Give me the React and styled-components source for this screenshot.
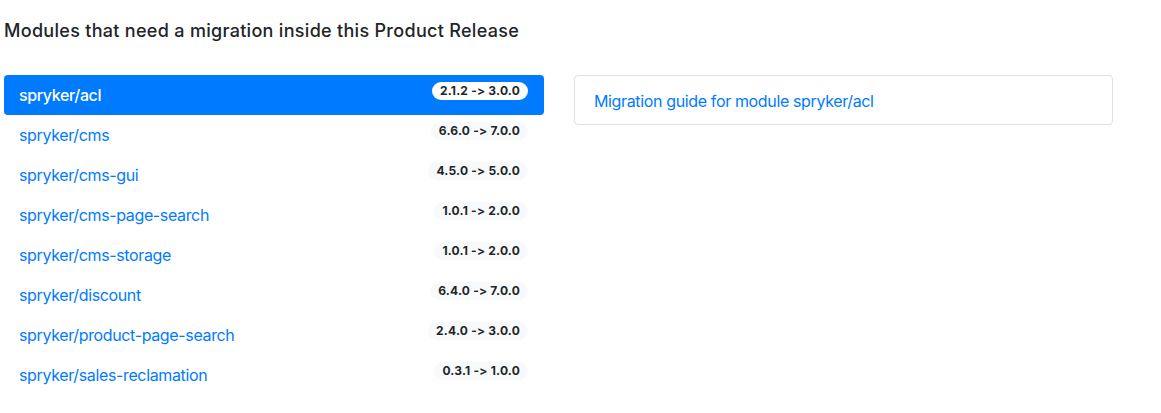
import React from "react";
import styled, { createGlobalStyle } from "styled-components";

const Global = createGlobalStyle`
  html, body { margin: 0; padding: 0; background: #fff; }
  body {
    font-family: Inter, "Liberation Sans", Arial, sans-serif;
    font-feature-settings: "calt" 0, "liga" 0;
    font-variant-ligatures: none;
    color: #212529;
    -webkit-font-smoothing: antialiased;
  }
`;

const Page = styled.div`
  padding: 19px 4px 0 4px;
`;

const Title = styled.h5`
  margin: 0 0 32px 0;
  font-size: 18px;
  font-weight: 500;
  line-height: 24px;
  letter-spacing: 0.3px;
  color: #212529;
`;

const Row = styled.div`
  display: flex;
  align-items: flex-start;
  gap: 30px;
`;

const List = styled.div`
  width: 540px;
  display: flex;
  flex-direction: column;
`;

const Item = styled.a`
  display: flex;
  justify-content: space-between;
  align-items: flex-start;
  height: 40px;
  box-sizing: border-box;
  padding: 8px 16px 8px 15px;
  border-radius: 4px;
  font-size: 16px;
  line-height: 24px;
  letter-spacing: -0.36px;
  text-decoration: none;
  background: ${(p) => (p.$active ? "#007bff" : "transparent")};
  color: ${(p) => (p.$active ? "#fff" : "#007bff")};
  font-weight: ${(p) => (p.$active ? 500 : 400)};
`;

const Badge = styled.span`
  margin-top: -1px;
  display: inline-block;
  height: 18px;
  line-height: 18px;
  padding: 0 8px;
  border-radius: 9px;
  font-size: 12px;
  font-weight: 700;
  letter-spacing: 0.2px;
  color: #212529;
  background: ${(p) => (p.$active ? "#fff" : "#f8f9fa")};
`;

const Card = styled.div`
  width: 539px;
  box-sizing: border-box;
  height: 50px;
  border: 1px solid #dfdfdf;
  border-radius: 4px;
  padding: 13px 19px;
`;

const CardLink = styled.a`
  font-size: 16px;
  line-height: 24px;
  letter-spacing: -0.36px;
  color: #007bff;
  text-decoration: none;
`;

const modules = [
  ["spryker/acl", "2.1.2 -> 3.0.0"],
  ["spryker/cms", "6.6.0 -> 7.0.0"],
  ["spryker/cms-gui", "4.5.0 -> 5.0.0"],
  ["spryker/cms-page-search", "1.0.1 -> 2.0.0"],
  ["spryker/cms-storage", "1.0.1 -> 2.0.0"],
  ["spryker/discount", "6.4.0 -> 7.0.0"],
  ["spryker/product-page-search", "2.4.0 -> 3.0.0"],
  ["spryker/sales-reclamation", "0.3.1 -> 1.0.0"],
];

export default function App() {
  return (
    <>
      <Global />
      <Page>
        <Title>Modules that need a migration inside this Product Release</Title>
        <Row>
          <List>
            {modules.map(([name, ver], i) => (
              <Item key={name} href="#" $active={i === 0}>
                <span>{name}</span>
                <Badge $active={i === 0}>{ver}</Badge>
              </Item>
            ))}
          </List>
          <Card>
            <CardLink href="#">Migration guide for module spryker/acl</CardLink>
          </Card>
        </Row>
      </Page>
    </>
  );
}
